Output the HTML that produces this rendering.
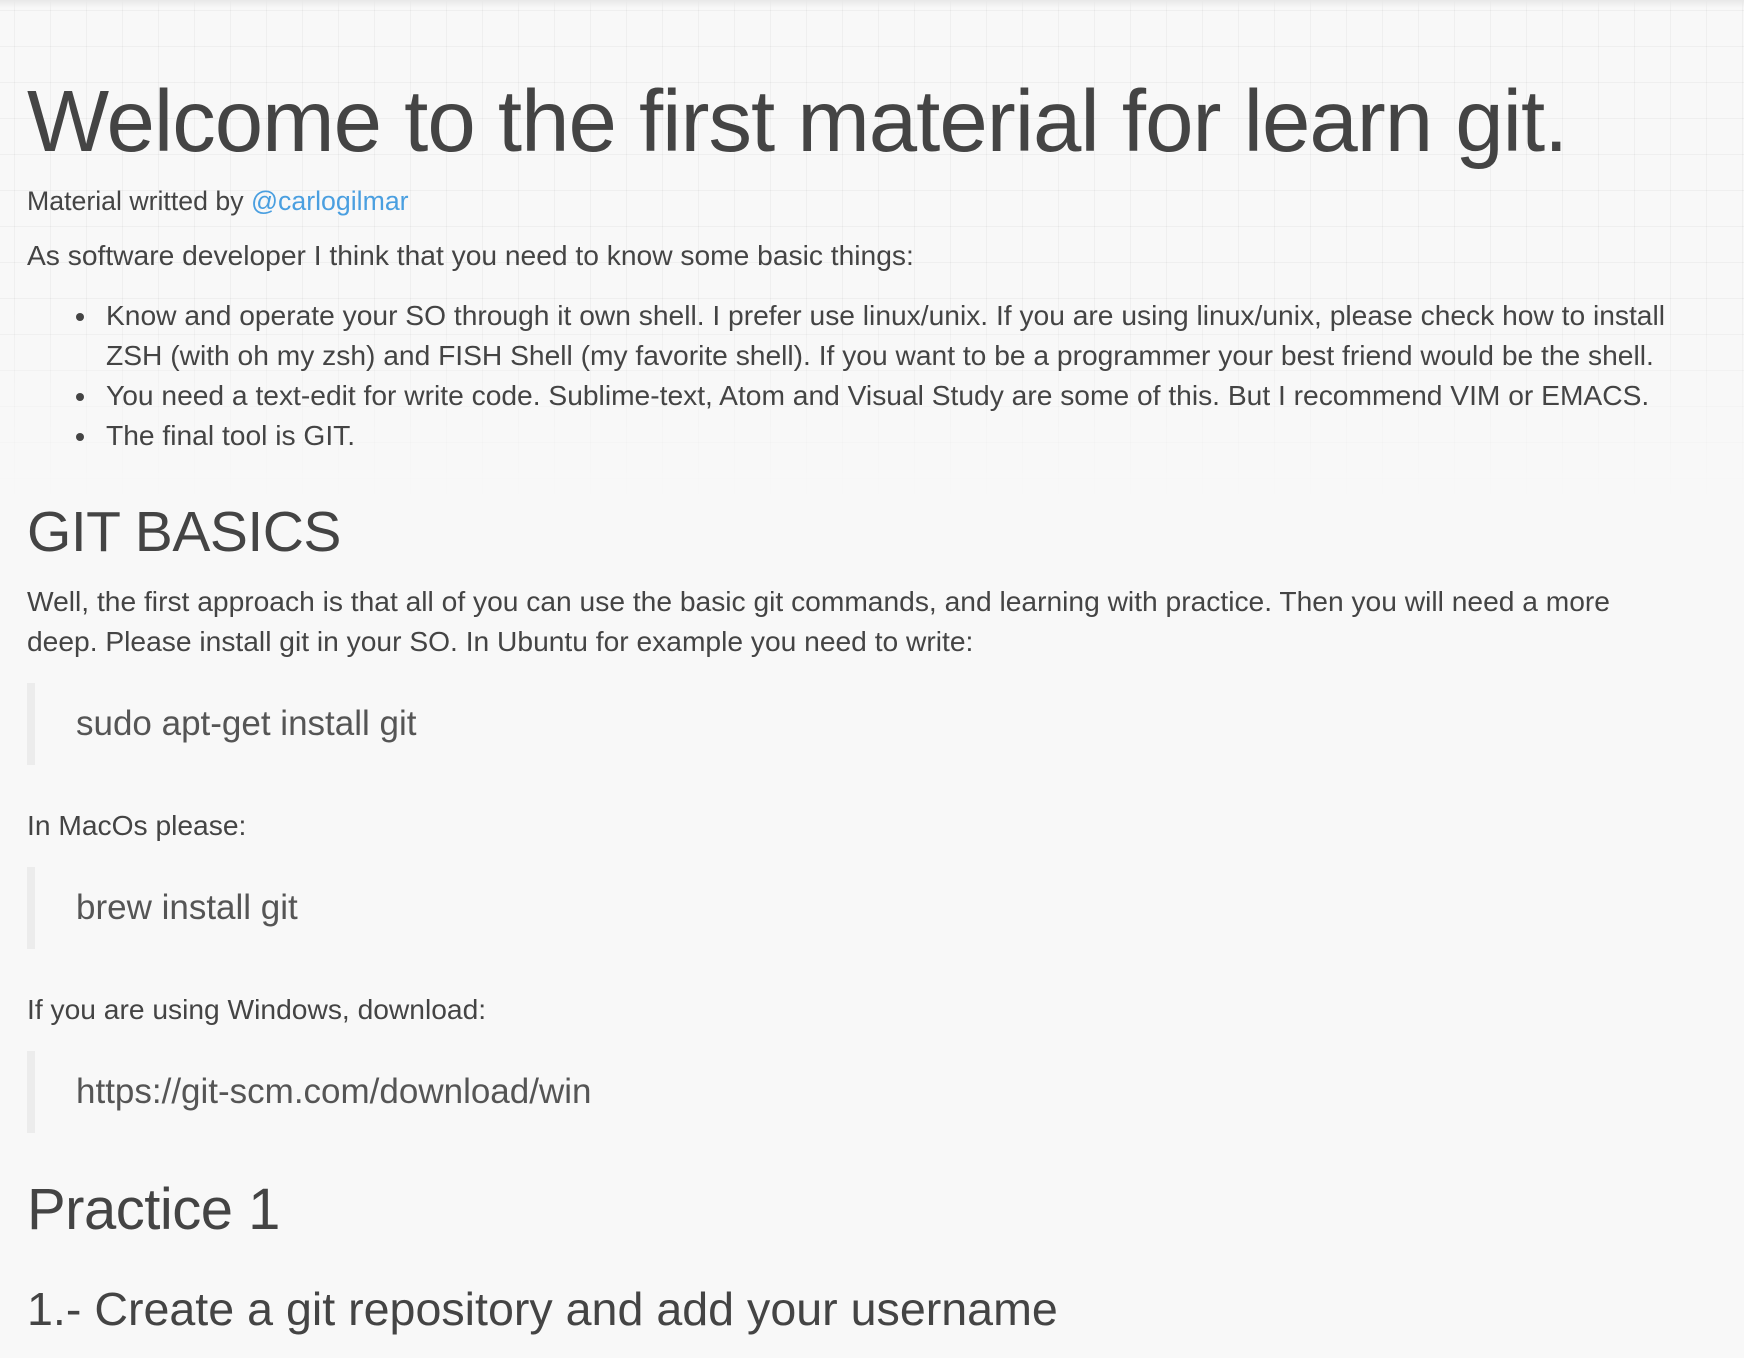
<!DOCTYPE html>
<html><head><meta charset="utf-8"><style>
html,body{margin:0;padding:0;}
body{width:1744px;height:1358px;background:#f8f8f8;position:relative;overflow:hidden;font-family:"Liberation Sans",Arial,sans-serif;color:#444;}
.grid{position:absolute;left:0;top:0;width:1744px;height:506px;
background-image:linear-gradient(to right,rgba(0,0,0,0.035) 1px,transparent 1px),linear-gradient(to bottom,rgba(0,0,0,0.035) 1px,transparent 1px);
background-size:36px 36px;background-position:14px 10px;
-webkit-mask-image:linear-gradient(to bottom,#000 60%,transparent);mask-image:linear-gradient(to bottom,#000 60%,transparent);}
.shadow{position:absolute;left:0;top:0;width:100%;height:8px;background:linear-gradient(#e8e8e8,rgba(248,248,248,0));}
.t{position:absolute;left:27px;white-space:nowrap;line-height:1.117;}
.b{font-size:28.2px;}
.h1{font-size:87px;letter-spacing:-1px;}
.h2{font-size:57px;letter-spacing:-0.5px;}
.h3{font-size:46.6px;}
.li{left:106px;}
.dot{position:absolute;left:76px;width:8px;height:8px;border-radius:50%;background:#444;}
.bq{position:absolute;left:27px;width:8px;background:#ececec;}
.code{left:76px;font-size:35px;color:#555;}
a{color:#4a9fe0;text-decoration:none;}
</style></head><body>
<div class="grid"></div>
<div class="shadow"></div>
<div class="t h1" style="top:73px">Welcome to the first material for learn git.</div>
<div class="t" style="top:187px;font-size:26.7px">Material writted by <a>@carlogilmar</a></div>
<div class="t b" style="top:240px">As software developer I think that you need to know some basic things:</div>
<div class="dot" style="top:313px"></div>
<div class="t b li" style="top:300px">Know and operate your SO through it own shell. I prefer use linux/unix. If you are using linux/unix, please check how to install</div>
<div class="t b li" style="top:340px">ZSH (with oh my zsh) and FISH Shell (my favorite shell). If you want to be a programmer your best friend would be the shell.</div>
<div class="dot" style="top:393px"></div>
<div class="t b li" style="top:380px">You need a text-edit for write code. Sublime-text, Atom and Visual Study are some of this. But I recommend VIM or EMACS.</div>
<div class="dot" style="top:433px"></div>
<div class="t b li" style="top:420px">The final tool is GIT.</div>
<div class="t h2" style="top:501px">GIT BASICS</div>
<div class="t b" style="top:586px">Well, the first approach is that all of you can use the basic git commands, and learning with practice. Then you will need a more</div>
<div class="t b" style="top:626px">deep. Please install git in your SO. In Ubuntu for example you need to write:</div>
<div class="bq" style="top:683px;height:82px"></div>
<div class="t code" style="top:704px">sudo apt-get install git</div>
<div class="t b" style="top:810px">In MacOs please:</div>
<div class="bq" style="top:867px;height:82px"></div>
<div class="t code" style="top:888px">brew install git</div>
<div class="t b" style="top:994px">If you are using Windows, download:</div>
<div class="bq" style="top:1051px;height:82px"></div>
<div class="t code" style="top:1072px">https://git-scm.com/download/win</div>
<div class="t h2" style="top:1178px;font-size:58px">Practice 1</div>
<div class="t h3" style="top:1283px">1.- Create a git repository and add your username</div>
</body></html>
